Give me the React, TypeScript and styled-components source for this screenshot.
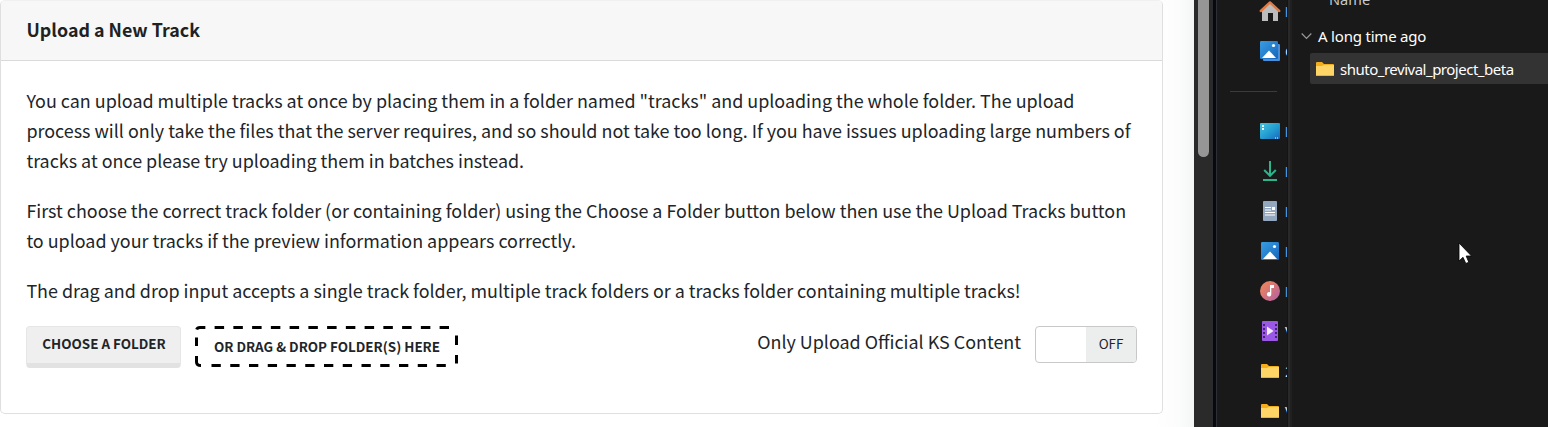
import React from "react";
import styled, { createGlobalStyle } from "styled-components";

const Global = createGlobalStyle`
  * { box-sizing: border-box; }
  body { margin: 0; overflow: hidden; background: #fff; }
`;

const Screen = styled.div`
  display: flex;
  width: 1548px;
  height: 427px;
  overflow: hidden;
`;

const WebPage = styled.main`
  width: 1194px;
  height: 427px;
  background: linear-gradient(90deg, #fff 1155px, #fcfcfc 1178px, #f4f6f6 1194px);
  font-family: "Noto Sans CJK SC", "Liberation Sans", sans-serif;
  color: #212529;
`;

const Card = styled.section`
  width: 1163px;
  height: 414px;
  border: 1px solid #dfdfdf;
  border-top-color: #f0f0f0;
  border-radius: 5px;
  background: #fff;
  overflow: hidden;
`;

const CardHeader = styled.header`
  height: 60px;
  padding: 0 25.5px;
  border-bottom: 1px solid #dadada;
  background: #f7f7f7;
  font-size: 17.85px;
  font-weight: 700;
  line-height: 56px;
  color: #212121;
`;

const CardBody = styled.div`
  padding: 24px 25px 0;
`;

const Paragraph = styled.p`
  margin: 0 0 20px 0.4px;
  font-size: 17.91px;
  line-height: 30px;
  white-space: nowrap;
`;

const Controls = styled.div`
  display: flex;
  align-items: flex-start;
  height: 42px;
  margin-top: 21px;
`;

const ChooseButton = styled.button`
  width: 155px;
  height: 42px;
  padding: 0 0 5px 1px;
  border: 1px solid #e6e6e6;
  border-bottom: 5px solid #e2e2e2;
  border-radius: 4px;
  background: #efefef;
  font: 700 13.4px/30px "Noto Sans CJK SC", sans-serif;
  color: #212529;
`;

const DropZone = styled.div`
  position: relative;
  width: 263px;
  height: 41px;
  margin-left: 14px;
  padding-left: 1px;
  text-align: center;
  font-size: 13.4px;
  font-weight: 700;
  line-height: 41px;
`;

const DashOutline = styled.svg`
  position: absolute;
  inset: 0;
`;

const ToggleLabel = styled.span`
  margin-left: auto;
  margin-right: 14px;
  font-size: 17.91px;
  line-height: 30px;
`;

const Toggle = styled.div`
  display: flex;
  width: 102px;
  height: 37px;
  border: 1px solid #c8c8c8;
  border-radius: 4px;
  overflow: hidden;
`;

const ToggleState = styled.span`
  width: 50px;
  margin-left: auto;
  background: #eceeee;
  text-align: center;
  font-size: 13.4px;
  line-height: 33px;
`;

const ScrollTrack = styled.div`
  width: 19px;
  height: 427px;
  padding-left: 4px;
  background: #2a2a2a;
`;

const ScrollThumb = styled.div`
  width: 11px;
  height: 157px;
  border-radius: 0 0 6px 6px;
  background: #969696;
`;

const WindowEdge = styled.div`
  width: 4px;
  background: #060910;
  border-right: 1px solid #2c3036;
`;

const Explorer = styled.section`
  display: flex;
  flex: 1;
  background: #191919;
  color: #fff;
  font-family: "Noto Sans", "Open Sans", sans-serif;
  svg { flex-shrink: 0; }
`;

const Sidebar = styled.nav`
  width: 70px;
  height: 427px;
  overflow: hidden;
`;

const SideList = styled.div`
  margin-top: -9px;
`;

const SideRow = styled.div`
  display: flex;
  align-items: center;
  height: 40px;
  padding-left: 42px;
  font-size: 15px;
  white-space: nowrap;
`;

const SideLabel = styled.span<{ $bright?: boolean }>`
  margin-left: ${(p) => (p.$bright ? 4 : 3.5)}px;
  color: ${(p) => (p.$bright ? "#cfe6ff" : "#4f9fec")};
`;

const Separator = styled.div`
  display: flex;
  align-items: center;
  height: 40px;
  padding-left: 13px;
  &::after {
    content: "";
    width: 47px;
    height: 1px;
    background: #3b3b3b;
  }
`;

const PaneDivider = styled.div`
  width: 5px;
  border-left: 1px solid #141414;
  border-right: 2px solid #202020;
  background: #292929;
`;

const FilePane = styled.div`
  flex: 1;
  height: 427px;
  font-size: 15px;
  overflow: hidden;
`;

const ColumnName = styled.div`
  height: 20px;
  margin-top: -11px;
  padding-left: 37px;
  color: #c8c8c8;
  font-size: 14.6px;
  line-height: 20px;
`;

const GroupRow = styled.div`
  display: flex;
  align-items: center;
  height: 44px;
  padding: 9px 0 0 9px;
  gap: 6px;
`;

const FileRow = styled.div`
  display: flex;
  align-items: center;
  height: 31px;
  margin-left: 18px;
  padding-left: 4px;
  gap: 4px;
  border-radius: 2px 0 0 2px;
  background: #333;
`;

const GroupName = styled.span`
  letter-spacing: -0.2px;
`;

const FileName = styled.span`
  letter-spacing: -0.49px;
`;

const Cursor = styled.svg`
  position: absolute;
  left: 1458px;
  top: 242px;
`;

const FolderIcon = () => (
  <svg width="22" height="22" viewBox="0 0 22 22">
    <path d="M2 5q0-1 1-1h5l2 2h9q1 0 1 1v10H2z" fill="#f6ad1b" />
    <path d="M2 8h6l2-1h10v10q0 1-1 1H3q-1 0-1-1z" fill="#ffd567" />
    <path d="M2 17h18q0 1-1 1H3q-1 0-1-1z" fill="#e7b04a" />
  </svg>
);

const HomeIcon = () => (
  <svg width="22" height="22" viewBox="0 0 22 22">
    <path d="M3 10l8-7 8 7v11h-5v-8H9v8H3z" fill="#bdbdbd" />
    <path d="M1.8 11L11 2.4l9.2 8.6" fill="none" stroke="#e07b45" strokeWidth="2.4" strokeLinecap="round" strokeLinejoin="round" />
  </svg>
);

const PictureIcon = ({ stacked = false }: { stacked?: boolean }) => (
  <svg width="22" height="22" viewBox="0 0 22 22">
    <defs>
      <linearGradient id="sky" x1="0" y1="0" x2="1" y2="1">
        <stop offset="0" stopColor="#3a9de0" />
        <stop offset="1" stopColor="#1565bd" />
      </linearGradient>
    </defs>
    {stacked && <path d="M5 4h15q1 0 1 1v15q0 1-1 1H5q-1 0-1-1z" fill="#4a8edb" />}
    <g transform={stacked ? "translate(-1 -1)" : undefined}>
      <rect x="2" y="2" width="18" height="18" rx="1.2" fill="url(#sky)" />
      <path d="M4 19l7-7.6 7 7.6z" fill="#fff" />
      <circle cx="15.5" cy="6.5" r="1.6" fill="#fff" />
    </g>
  </svg>
);

const DesktopIcon = () => (
  <svg width="22" height="22" viewBox="0 0 22 22">
    <defs>
      <linearGradient id="desk" x1="0" y1="0" x2="1" y2="1">
        <stop offset="0" stopColor="#48c4df" />
        <stop offset=".55" stopColor="#229bd0" />
        <stop offset="1" stopColor="#1967bd" />
      </linearGradient>
    </defs>
    <rect x="1" y="3" width="20" height="16" rx="1" fill="url(#desk)" />
    <path d="M3 5h2v2H3zM3 8h2v2H3zM16 17.5h1v1h-1zM18 17.5h1v1h-1z" fill="#dff" />
  </svg>
);

const DownloadIcon = () => (
  <svg width="22" height="22" viewBox="0 0 22 22" fill="none" stroke="#2cb58c" strokeWidth="2">
    <path d="M11 1v14.5M5.2 10l5.8 5.8L16.8 10M4 20h14" />
  </svg>
);

const DocumentIcon = () => (
  <svg width="22" height="22" viewBox="0 0 22 22">
    <rect x="4" y="1" width="14" height="20" rx="1" fill="#93a7bf" />
    <path d="M6 7h6v1H6zM6 9.5h6v1H6zM6 12h10v1H6zM6 14.5h10v1H6zM13 7h3v3h-3z" fill="#fff" />
  </svg>
);

const MusicIcon = () => (
  <svg width="22" height="22" viewBox="0 0 22 22">
    <defs>
      <linearGradient id="disc" x1="0" y1="0" x2="1" y2="1">
        <stop offset="0.2" stopColor="#e88162" />
        <stop offset="1" stopColor="#b05fa8" />
      </linearGradient>
    </defs>
    <circle cx="11" cy="11" r="10" fill="url(#disc)" />
    <path d="M11 5h4v3h-2.7v6.2a2.2 2.2 0 1 1-1.3-2z" fill="#fff" />
  </svg>
);

const VideoIcon = () => (
  <svg width="22" height="22" viewBox="0 0 22 22">
    <rect x="3" y="1" width="16" height="20" rx="1" fill="#9b58e6" />
    <path d="M8 6.5l6.5 4.5L8 15.5z" fill="#f3eefb" />
    <path d="M5 4v15M17 4v15" stroke="#432768" strokeWidth="2" strokeDasharray="2 2" />
  </svg>
);

type Place = { icon: React.ReactNode; label: string; bright?: boolean };

const pinned: Place[] = [
  { icon: <HomeIcon />, label: "H" },
  { icon: <PictureIcon stacked />, label: "G", bright: true },
];

const places: Place[] = [
  { icon: <DesktopIcon />, label: "D" },
  { icon: <DownloadIcon />, label: "D" },
  { icon: <DocumentIcon />, label: "D" },
  { icon: <PictureIcon />, label: "P" },
  { icon: <MusicIcon />, label: "M" },
  { icon: <VideoIcon />, label: "V", bright: true },
  { icon: <FolderIcon />, label: "2", bright: true },
  { icon: <FolderIcon />, label: "V", bright: true },
];

const PlaceRow = ({ icon, label, bright }: Place) => (
  <SideRow>
    {icon}
    <SideLabel $bright={bright}>{label}</SideLabel>
  </SideRow>
);

export default function App() {
  return (
    <Screen>
      <Global />
      <WebPage>
        <Card>
          <CardHeader>Upload a New Track</CardHeader>
          <CardBody>
            <Paragraph>
              You can upload multiple tracks at once by placing them in a folder named "tracks" and uploading the whole folder. The upload
              <br />
              process will only take the files that the server requires, and so should not take too long. If you have issues uploading large numbers of
              <br />
              tracks at once please try uploading them in batches instead.
            </Paragraph>
            <Paragraph>
              First choose the correct track folder (or containing folder) using the Choose a Folder button below then use the Upload Tracks button
              <br />
              to upload your tracks if the preview information appears correctly.
            </Paragraph>
            <Paragraph>
              The drag and drop input accepts a single track folder, multiple track folders or a tracks folder containing multiple tracks!
            </Paragraph>
            <Controls>
              <ChooseButton>CHOOSE A FOLDER</ChooseButton>
              <DropZone>
                <DashOutline width="263" height="41" fill="none" stroke="#000" strokeWidth="3">
                  <path d="M1.5 4Q2 1.5 5 1.5H254" strokeDasharray="9.5 9.25" strokeDashoffset="-0.5" />
                  <path d="M1.5 11.5v8.5M1.5 30v6Q1.5 39.5 6 39.5" />
                  <path d="M16.5 39.5H256" strokeDasharray="9.3 9.45" />
                  <path d="M261.5 9.5v9.5M261.5 29v8.5" />
                </DashOutline>
                OR DRAG &amp; DROP FOLDER(S) HERE
              </DropZone>
              <ToggleLabel>Only Upload Official KS Content</ToggleLabel>
              <Toggle>
                <ToggleState>OFF</ToggleState>
              </Toggle>
            </Controls>
          </CardBody>
        </Card>
      </WebPage>
      <ScrollTrack>
        <ScrollThumb />
      </ScrollTrack>
      <WindowEdge />
      <Explorer>
        <Sidebar>
          <SideList>
            {pinned.map((p, i) => <PlaceRow key={i} {...p} />)}
            <Separator />
            {places.map((p, i) => <PlaceRow key={i} {...p} />)}
          </SideList>
        </Sidebar>
        <PaneDivider />
        <FilePane>
          <ColumnName>Name</ColumnName>
          <GroupRow>
            <svg width="11" height="8" fill="none" stroke="#9a9a9a" strokeWidth="1.2"><path d="M.7 1.5l4.8 4.8 4.8-4.8" /></svg>
            <GroupName>A long time ago</GroupName>
          </GroupRow>
          <FileRow>
            <FolderIcon />
            <FileName>shuto_revival_project_beta</FileName>
          </FileRow>
        </FilePane>
      </Explorer>
      <Cursor width="14" height="24" viewBox="0 0 14 24">
        <path d="M1 1v18l4-3.7 2.8 6.2 3-1.3L8.2 14h5.3z" fill="#fff" stroke="#000" strokeWidth=".8" />
      </Cursor>
    </Screen>
  );
}
